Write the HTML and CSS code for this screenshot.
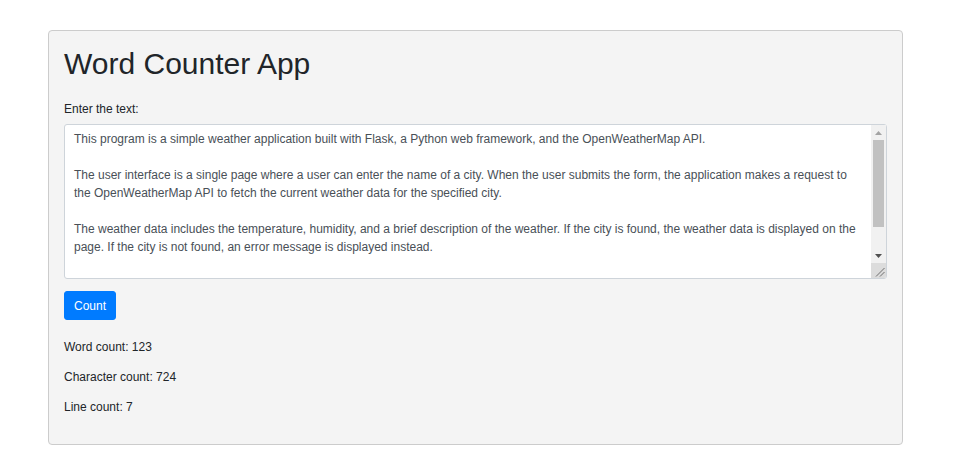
FILE: index.html
```html
<!DOCTYPE html>
<html>
<head>
<meta charset="utf-8">
<link rel="stylesheet" href="styles.css">
</head>
<body>
<div class="panel">
  <h1 class="title">Word Counter App</h1>
  <form class="form">
    <label class="label" for="text">Enter the text:</label>
    <div class="field">
      <textarea class="input" id="text">This program is a simple weather application built with Flask, a Python web framework, and the OpenWeatherMap API.

The user interface is a single page where a user can enter the name of a city. When the user submits the form, the application makes a request to the OpenWeatherMap API to fetch the current weather data for the specified city.

The weather data includes the temperature, humidity, and a brief description of the weather. If the city is found, the weather data is displayed on the page. If the city is not found, an error message is displayed instead.

The application uses the requests library to send HTTP requests to the API and the Jinja2 templating engine to render the results on the page.</textarea>
      <div class="scrollbar" aria-hidden="true">
        <div class="sb-btn">
          <svg width="7" height="4" viewBox="0 0 7 4"><path d="M0 4 L3.5 0 L7 4 Z" fill="#a3a3a3"/></svg>
        </div>
        <div class="sb-track"><div class="sb-thumb"></div></div>
        <div class="sb-btn">
          <svg width="7" height="4" viewBox="0 0 7 4"><path d="M0 0 L7 0 L3.5 4 Z" fill="#505050"/></svg>
        </div>
        <div class="sb-corner">
          <svg width="15" height="15" viewBox="0 0 15 15"><path d="M5 13.5 L13.5 5 M9 13.5 L13.5 9" stroke="#6e6e6e" stroke-width="1" fill="none"/></svg>
        </div>
      </div>
    </div>
    <button type="button" class="btn">Count</button>
  </form>
  <p class="result">Word count: 123</p>
  <p class="result">Character count: 724</p>
  <p class="result">Line count: 7</p>
</div>
</body>
</html>
```
FILE: styles.css
```css
html, body {
  margin: 0;
  padding: 0;
  background: #ffffff;
  font-family: "Liberation Sans", Arial, sans-serif;
  color: #212529;
}
body {
  padding: 30px 53px 24px 48px;
}
.panel {
  background: #f4f4f4;
  border: 1px solid #cccccc;
  border-radius: 4px;
  padding: 15px 15px 15px;
}
.title {
  margin: 0 0 18px;
  font-size: 30px;
  font-weight: 400;
  line-height: 36px;
  color: #212529;
}
.form {
  display: flex;
  flex-direction: column;
  align-items: flex-start;
}
.label {
  font-size: 12px;
  line-height: 18px;
  margin-bottom: 6px;
  color: #212529;
}
.field {
  position: relative;
  width: 100%;
  display: flex;
}
.input {
  box-sizing: border-box;
  width: 100%;
  height: 155px;
  margin: 0;
  padding: 5px 24px 5px 9px;
  border: 1px solid #ced4da;
  border-radius: 3px;
  background: #ffffff;
  font-family: "Liberation Sans", Arial, sans-serif;
  font-size: 12px;
  line-height: 18px;
  color: #495057;
  resize: none;
  overflow: hidden;
}
.scrollbar {
  position: absolute;
  top: 1px;
  right: 1px;
  bottom: 1px;
  width: 15px;
  display: flex;
  flex-direction: column;
  background: #f1f1f1;
  border-bottom-right-radius: 2px;
  overflow: hidden;
}
.sb-btn {
  height: 15px;
  display: flex;
  align-items: center;
  justify-content: center;
}
.sb-btn svg {
  display: block;
}
.sb-track {
  flex: 1;
}
.sb-thumb {
  margin: 0 2px;
  height: 87px;
  background: #c1c1c1;
}
.sb-corner {
  height: 15px;
  background: #dcdcdc;
}
.sb-corner svg {
  display: block;
}
.btn {
  margin-top: 12px;
  height: 29px;
  padding: 0 9px;
  border: 1px solid #007bff;
  border-radius: 3px;
  background: #007bff;
  color: #ffffff;
  font-family: "Liberation Sans", Arial, sans-serif;
  font-size: 12px;
  line-height: 18px;
}
.result {
  margin: 21px 0 0;
  font-size: 12px;
  line-height: 12px;
  color: #212529;
}
.result + .result {
  margin-top: 18px;
}
.panel > .result:last-child {
  margin-bottom: 16px;
}
```
